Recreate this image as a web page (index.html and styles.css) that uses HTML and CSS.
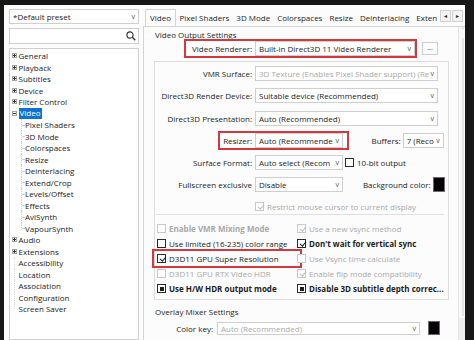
FILE: index.html
```html
<!DOCTYPE html>
<html lang="en">

<head>
    <meta charset="utf-8">
    <meta name="viewport" content="width=device-width, initial-scale=1.0">
    <title>Options - Video</title>
    <link rel="stylesheet" href="styles.css">
</head>

<body>
    <div class="window">
        <aside class="sidebar">
            <div class="combo"><span>*Default preset</span><span class="chev">v</span></div>
            <div class="search">
                <svg width="10" height="10" viewBox="0 0 10 10">
                    <circle cx="4" cy="4" r="3.1" fill="none" stroke="#2b2b2b" stroke-width="1.1" />
                    <path d="M6.3 6.3 L9.3 9.3" stroke="#2b2b2b" stroke-width="1.3" />
                </svg>
            </div>
            <ul class="tree">
                <li class="node"><i class="exp plus"></i>General</li>
                <li class="node"><i class="exp plus"></i>Playback</li>
                <li class="node"><i class="exp plus"></i>Subtitles</li>
                <li class="node"><i class="exp plus"></i>Device</li>
                <li class="node"><i class="exp plus"></i>Filter Control</li>
                <li class="node"><i class="exp"></i><span class="sel">Video</span></li>
                <li class="child">Pixel Shaders</li>
                <li class="child">3D Mode</li>
                <li class="child">Colorspaces</li>
                <li class="child">Resize</li>
                <li class="child">Deinterlacing</li>
                <li class="child">Extend/Crop</li>
                <li class="child">Levels/Offset</li>
                <li class="child">Effects</li>
                <li class="child">AviSynth</li>
                <li class="child last">VapourSynth</li>
                <li class="node"><i class="exp plus"></i>Audio</li>
                <li class="node"><i class="exp plus"></i>Extensions</li>
                <li class="leaf">Accessibility</li>
                <li class="leaf">Location</li>
                <li class="leaf">Association</li>
                <li class="leaf">Configuration</li>
                <li class="leaf">Screen Saver</li>
            </ul>
        </aside>

        <main class="main">
            <div class="tabbar">
                <div class="tabs">
                    <span class="tab active">Video</span>
                    <span class="tab">Pixel Shaders</span>
                    <span class="tab">3D Mode</span>
                    <span class="tab">Colorspaces</span>
                    <span class="tab">Resize</span>
                    <span class="tab">Deinterlacing</span>
                    <span class="tab">Exten</span>
                </div>
                <div class="tab-arrows">
                    <span class="arr">&#9666;</span>
                    <span class="arr">&#9656;</span>
                </div>
            </div>

            <div class="page">
                <div class="scroll">
                    <div class="group-title">Video Output Settings</div>
                    <div class="row top-row">
                        <div class="mark mark-renderer">
                            <span class="lbl">Video Renderer:</span>
                            <div class="combo w160"><span>Built-in Direct3D 11 Video Renderer</span><span class="chev">v</span></div>
                        </div>
                        <span class="dots">...</span>
                    </div>

                    <div class="box">
                        <div class="fields">
                            <div class="row">
                                <span class="lbl">VMR Surface:</span>
                                <div class="combo w183 off"><span>3D Texture (Enables Pixel Shader support) (Re</span><span class="chev">v</span></div>
                            </div>
                            <div class="row">
                                <span class="lbl">Direct3D Render Device:</span>
                                <div class="combo w183"><span>Suitable device (Recommended)</span><span class="chev">v</span></div>
                            </div>
                            <div class="row">
                                <span class="lbl">Direct3D Presentation:</span>
                                <div class="combo w183"><span>Auto (Recommended)</span><span class="chev">v</span></div>
                            </div>
                            <div class="row">
                                <div class="mark mark-resizer">
                                    <span class="lbl">Resizer:</span>
                                    <div class="combo w88"><span>Auto (Recommende</span><span class="chev">v</span></div>
                                </div>
                                <span class="side-lbl">Buffers:</span>
                                <div class="combo w41"><span>7 (Reco</span><span class="chev">v</span></div>
                            </div>
                            <div class="row">
                                <span class="lbl">Surface Format:</span>
                                <div class="combo w88"><span>Auto select (Recom</span><span class="chev">v</span></div>
                                <span class="check bitout"><i class="cb"></i>10-bit output</span>
                            </div>
                            <div class="row">
                                <span class="lbl">Fullscreen exclusive</span>
                                <div class="combo w88"><span>Disable</span><span class="chev">v</span></div>
                                <span class="side-lbl">Background color:</span>
                                <span class="swatch"></span>
                            </div>
                            <div class="row restrict">
                                <span class="check off"><i class="cb on"></i>Restrict mouse cursor to current display</span>
                            </div>
                        </div>

                        <div class="checks">
                            <span class="check off bold"><i class="cb"></i>Enable VMR Mixing Mode</span>
                            <span class="check off"><i class="cb on"></i>Use a new vsync method</span>
                            <span class="check"><i class="cb"></i>Use limited (16-235) color range</span>
                            <span class="check bold"><i class="cb on"></i>Don't wait for vertical sync</span>
                            <span class="check mark mark-sr"><i class="cb on"></i>D3D11 GPU Super Resolution</span>
                            <span class="check off"><i class="cb"></i>Use Vsync time calculate</span>
                            <span class="check off"><i class="cb"></i>D3D11 GPU RTX Video HDR</span>
                            <span class="check off"><i class="cb on"></i>Enable flip mode compatibility</span>
                            <span class="check bold"><i class="cb mixed"></i>Use H/W HDR output mode</span>
                            <span class="check bold"><i class="cb mixed"></i>Disable 3D subtitle depth correc...</span>
                        </div>
                    </div>

                    <div class="group-title overlay-title">Overlay Mixer Settings</div>
                    <div class="row key-row">
                        <span class="lbl short">Color key:</span>
                        <div class="combo w203 off"><span>Auto (Recommended)</span><span class="chev">v</span></div>
                        <span class="swatch key"></span>
                    </div>
                </div>

                <div class="scrollbar">
                    <span class="up">&#708;</span>
                    <span class="thumb"></span>
                    <span class="thumb-end"></span>
                </div>
            </div>
        </main>
    </div>
</body>

</html>
```

FILE: styles.css
```css
* {
    box-sizing: border-box;
}

body {
    margin: 0;
    background-color: #171717;
    font-family: "Open Sans", "Noto Sans", sans-serif;
    font-size: 8px;
    color: #1c1c1c;
    overflow: hidden;
}

.window {
    display: flex;
    width: 461px;
    height: 335px;
    margin: 5px 0 0 4px;
    background-color: #fcfcfc;
    overflow: hidden;
}

/**************** Venstre side **************/

.sidebar {
    width: 130px;
    margin-left: 5px;
    padding-top: 4px;
    display: flex;
    flex-direction: column;
    gap: 4px;
}

.combo {
    display: flex;
    align-items: center;
    justify-content: space-between;
    gap: 1px;
    height: 15px;
    padding: 0 3px 0 3px;
    border: 1px solid #cfcfcf;
    background-color: #fff;
    white-space: nowrap;
    overflow: hidden;
    flex: none;
}

.chev {
    font-size: 7px;
    color: #4a4a4a;
    flex: none;
}

.combo.off span:first-child {
    color: #a9a9a9;
}

.search {
    height: 16px;
    border: 1px solid #cfcfcf;
    background-color: #fff;
    display: flex;
    align-items: center;
    justify-content: flex-end;
    padding-right: 2px;
}

.tree {
    flex: 1;
    margin: 0;
    padding: 1px 0 0;
    list-style: none;
    border: 1px solid #cfcfcf;
    background-color: #fff;
}

.tree li {
    height: 11.5px;
    line-height: 11.5px;
    display: flex;
    align-items: center;
    white-space: nowrap;
    position: relative;
}

.node {
    padding-left: 2px;
}

.exp {
    width: 5px;
    height: 5px;
    margin-right: 1.5px;
    border: 1px solid #a3a3a3;
    position: relative;
    flex: none;
}

.exp::before {
    content: "";
    position: absolute;
    left: 0;
    top: 1px;
    width: 3px;
    height: 1px;
    background-color: #333;
}

.exp.plus::after {
    content: "";
    position: absolute;
    left: 1px;
    top: 0;
    width: 1px;
    height: 3px;
    background-color: #333;
}

.sel {
    background-color: #0a74d6;
    color: #fff;
    padding: 0 1px;
    line-height: 10.5px;
}

.child {
    padding-left: 15px;
}

.child::before {
    content: "";
    position: absolute;
    left: 11px;
    top: 0;
    bottom: 0;
    border-left: 1px dotted #cfcfcf;
}

.child.last::before {
    bottom: 50%;
}

.child::after {
    content: "";
    position: absolute;
    left: 12px;
    top: 50%;
    width: 2px;
    border-top: 1px dotted #cfcfcf;
}

.leaf {
    padding-left: 8.5px;
}

.leaf::before {
    content: "";
    position: absolute;
    left: 4px;
    top: 0;
    bottom: 0;
    border-left: 1px dotted #dadada;
}

.leaf:last-child::before {
    bottom: 50%;
}

/**************** Faner **************/

.main {
    flex: 1;
    min-width: 0;
    margin-left: 4px;
    padding-top: 4px;
    display: flex;
    flex-direction: column;
}

.tabbar {
    display: flex;
    height: 17px;
    position: relative;
    z-index: 1;
}

.tabs {
    flex: 1;
    display: flex;
    overflow: hidden;
    padding-left: 2px;
}

.tab {
    padding: 0 3.5px;
    line-height: 17px;
    white-space: nowrap;
}

.tab.active {
    height: 18px;
    padding: 0 4px;
    line-height: 16px;
    border: 1px solid #d3d3d3;
    border-bottom: none;
    background-color: #fcfcfc;
}

.tab-arrows {
    display: flex;
    gap: 1px;
    padding: 1px 2px 0 0;
}

.arr {
    width: 11px;
    height: 12px;
    border: 1px solid #d0d0d0;
    background-color: #f3f3f3;
    font-size: 6px;
    line-height: 10px;
    text-align: center;
    color: #222;
}

/**************** Indstillinger **************/

.page {
    flex: 1;
    display: flex;
    border: 1px solid #d3d3d3;
    border-bottom: none;
    background-color: #fcfcfc;
}

.scroll {
    flex: 1;
    padding: 2px 9px 0 10px;
}

.group-title {
    height: 11px;
    line-height: 11px;
    padding-left: 1px;
}

.row {
    display: flex;
    align-items: center;
    height: 15px;
    white-space: nowrap;
}

.top-row {
    margin-top: 1px;
}

.lbl {
    width: 97px;
    margin-right: 3px;
    text-align: right;
    flex: none;
}

.top-row .lbl {
    width: 98px;
}

.mark {
    position: relative;
    display: flex;
    align-items: center;
}

.mark::after {
    content: "";
    position: absolute;
    top: -2px;
    bottom: -2px;
    border: 2px solid #d2383d;
}

.mark-renderer::after {
    left: 30px;
    right: -2px;
}

.mark-resizer::after {
    left: 63px;
    right: -6px;
}

.mark-sr::after {
    left: -5px;
    right: -5px;
}

.w160 {
    width: 160px;
}

.w183 {
    width: 183px;
}

.w88 {
    width: 88px;
}

.w41 {
    width: 41px;
}

.w203 {
    width: 203px;
}

.dots {
    width: 16px;
    height: 13px;
    margin-left: 7px;
    border: 1px solid #cdcdcd;
    background-color: #fdfdfd;
    font-size: 7px;
    line-height: 9px;
    text-align: center;
}

.box {
    margin-top: 5px;
    padding: 4px 4px 3px 0;
    border: 1px solid #dcdcdc;
}

.fields {
    display: flex;
    flex-direction: column;
    gap: 7px;
}

.fields .row:nth-child(n+3) {
    position: relative;
    top: 1px;
}

.side-lbl {
    margin-left: auto;
    margin-right: 2px;
}

.swatch {
    width: 12px;
    height: 15px;
    margin-right: -1px;
    background-color: #050205;
    border: 1px solid #6a6a6a;
    flex: none;
}

.restrict {
    padding-left: 100px;
}

.check {
    display: flex;
    align-items: center;
    height: 15px;
    white-space: nowrap;
}

.bitout {
    margin-left: 2px;
}

.cb {
    width: 9px;
    height: 9px;
    margin-right: 3px;
    border: 1px solid #2a2a2a;
    background-color: #fff;
    position: relative;
    flex: none;
}

.cb.on::after {
    content: "";
    position: absolute;
    left: 2.5px;
    top: 0;
    width: 2.5px;
    height: 5px;
    border: solid #1c1c1c;
    border-width: 0 1px 1px 0;
    transform: rotate(40deg);
}

.cb.mixed::after {
    content: "";
    position: absolute;
    left: 1.5px;
    top: 1.5px;
    width: 4px;
    height: 4px;
    background-color: #1c1c1c;
}

.check.off {
    color: #a9a9a9;
}

.check.off .cb {
    border-color: #c9c9c9;
}

.check.off .cb.on::after {
    border-color: #bdbdbd;
}

.bold {
    font-weight: 700;
}

.checks {
    display: grid;
    grid-template-columns: 140px 1fr;
    grid-auto-rows: 15px;
    margin: 1px 0 0 1px;
    padding: 6px 0 0 1px;
    border-top: 1px solid #e0e0e0;
}

.overlay-title {
    margin-top: 6px;
}

.key-row {
    margin-top: 4px;
    height: 14px;
}

.key-row .combo {
    height: 13px;
}

.lbl.short {
    width: 59px;
    margin-right: 4px;
}

.swatch.key {
    height: 14px;
    margin-left: 8px;
}

/**************** Scrollbar **************/

.scrollbar {
    width: 12px;
    display: flex;
    flex-direction: column;
    align-items: center;
    border-left: 1px solid #e4e4e4;
    background-color: #fafafa;
}

.up {
    font-size: 7px;
    line-height: 8px;
    color: #8a8a8a;
}

.thumb {
    flex: 1;
    width: 2px;
    margin: 3px 0 2px;
    background-color: #e6e6e6;
}

.thumb-end {
    width: 8px;
    height: 22px;
    background-color: #eeeeee;
}
```
